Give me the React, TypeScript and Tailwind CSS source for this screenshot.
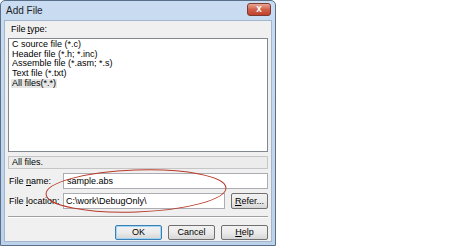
import React from 'react';

const fileTypes = [
  'C source file (*.c)',
  'Header file (*.h; *.inc)',
  'Assemble file (*.asm; *.s)',
  'Text file (*.txt)',
  'All files(*.*)',
];

const font = { fontFamily: '"Liberation Sans", Arial, sans-serif' };

const DlgButton: React.FC<{ children: React.ReactNode; focused?: boolean; className?: string }> = ({ children, focused, className }) => (
  <button
    type="button"
    className={`h-[15px] rounded-[2px] border ${focused ? 'border-[#3c7fb1] shadow-[inset_0_0_0_1px_#9fd5f7]' : 'border-[#707070]'} bg-gradient-to-b from-[#f2f2f2] via-[#ebebeb] to-[#d6d6d6] text-[9px] leading-none text-black flex items-center justify-center ${className ?? ''}`}
  >
    {children}
  </button>
);

const App: React.FC = () => {
  return (
    <div className="w-[452px] h-[248px] bg-white relative" style={font}>
      <div className="w-[276px] h-[246px] border border-[#5a6f89] rounded-t-[5px] bg-gradient-to-b from-[#c9dcf1] to-[#bcd2ea] flex flex-col px-[3px] pb-[3px]">
        {/* title bar */}
        <div className="h-[19px] flex items-center justify-between pl-[2px] pr-[1px]">
          <span className="text-[10px] text-[#1e1e1e] leading-none">Add File</span>
          <div className="w-[24px] h-[13px] -mt-[3px] rounded-[3px] border border-[#7c3a33] bg-gradient-to-b from-[#e7a796] via-[#d0604a] to-[#c1412b] flex items-center justify-center">
            <span className="text-white text-[10px] font-bold leading-none">x</span>
          </div>
        </div>

        {/* client area */}
        <div className="flex-1 bg-[#f0f0f0] border border-[#a3b6cc] px-[3px] flex flex-col text-[9px] text-black leading-none">
          <div className="mt-[3px] h-[11px] flex items-center pl-[3px]">
            File <span className="underline ml-[2px]">t</span>ype:
          </div>

          <div className="mt-[3px] h-[114px] border border-[#828790] bg-white pt-[1px] pl-[2px]">
            {fileTypes.map((t, i) => (
              <div key={t} className="h-[9.6px] flex items-center">
                <span className={`px-[1px] ${i === fileTypes.length - 1 ? 'bg-[#e5e5e5]' : ''}`}>{t}</span>
              </div>
            ))}
          </div>

          <div className="mt-[4px] h-[13px] border border-[#c5c5c5] bg-[#ececec] flex items-center pl-[3px]">
            All files.
          </div>

          <div className="mt-[4px] h-[16px] flex items-center">
            <span className="w-[55px] pl-[1px]">
              File <span className="underline">n</span>ame:
            </span>
            <div className="flex-1 h-full border border-[#abadb3] bg-white flex items-center pl-[3px]">sample.abs</div>
          </div>

          <div className="mt-[4px] h-[16px] flex items-center">
            <span className="w-[55px] pl-[1px]">
              File <span className="underline">l</span>ocation:
            </span>
            <div className="w-[162px] h-full border border-[#abadb3] bg-white flex items-center pl-[2px]">C:\work\DebugOnly\</div>
            <DlgButton className="ml-auto w-[37px] h-[16px]">
              <span className="underline">R</span>efer...
            </DlgButton>
          </div>

          <div className="mt-[7px] h-[2px] border-t border-[#a0a0a0] border-b border-b-white" />

          <div className="mt-[7px] flex justify-end gap-[6px]">
            <DlgButton focused className="w-[47px]">OK</DlgButton>
            <DlgButton className="w-[47px]">Cancel</DlgButton>
            <DlgButton className="w-[47px]">
              <span className="underline">H</span>elp
            </DlgButton>
          </div>
        </div>
      </div>

      {/* red annotation ellipse */}
      <svg className="absolute left-0 top-0 pointer-events-none" width="452" height="248">
        <ellipse cx="136" cy="191" rx="90" ry="21" fill="none" stroke="#b83a2a" strokeWidth="1" transform="rotate(-2 136 191)" />
      </svg>
    </div>
  );
};

export default App;
